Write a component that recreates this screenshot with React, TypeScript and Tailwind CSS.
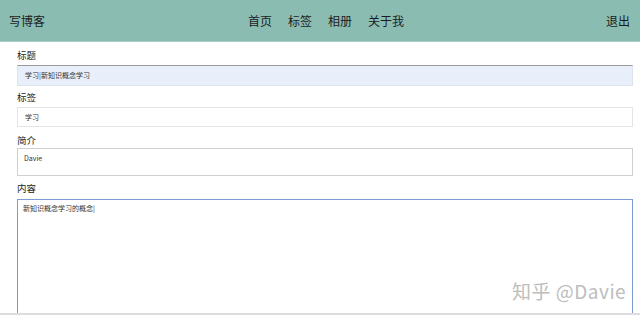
const font = { fontFamily: '"Noto Sans CJK SC", "Liberation Sans", sans-serif' };

export default function App() {
  const nav = ['首页', '标签', '相册', '关于我'];

  return (
    <div className="w-[640px] h-[315px] overflow-hidden bg-white relative" style={font}>
      <header className="h-[42px] bg-[#8bbcb2] border-b border-[#a9cfc6] flex items-center px-[9px] text-[#1c1c1c] text-[12px]">
        <div className="w-[239px]">写博客</div>
        <nav className="flex gap-[16px]">
          {nav.map((n) => (
            <span key={n}>{n}</span>
          ))}
        </nav>
        <div className="ml-auto mr-[1px]">退出</div>
      </header>

      <form className="pl-[17px] pr-[7px] text-[9.5px] text-[#222]">
        <div className="mt-[6px] h-[14px] leading-[14px]">标题</div>
        <div className="mt-[3px] h-[21px] bg-[#e8effa] border border-[#dde3ec] border-t-[#9a9a9a] flex items-center pl-[7px] text-[7px] text-[#333]">
          学习|新知识概念学习
        </div>
        <div className="mt-[4px] h-[14px] leading-[14px]">标签</div>
        <div className="mt-[3px] h-[20px] bg-white border border-[#e4e4e4] flex items-center pl-[7px] text-[7px] text-[#333]">
          学习
        </div>
        <div className="mt-[6px] h-[14px] leading-[14px]">简介</div>
        <div className="mt-[1px] h-[28px] bg-white border border-[#cfcfcf] pl-[6px] pt-[4px] text-[7px] text-[#333] leading-[10px]">
          Davie
        </div>
        <div className="mt-[5px] h-[14px] leading-[14px]">内容</div>
        <div className="mt-[4px] h-[130px] bg-white border border-[#7d9bd3] pl-[5px] pt-[3px] text-[7px] text-[#333] leading-[10px]">
          新知识概念学习的概念|
        </div>
      </form>

      <div className="absolute left-0 right-0 bottom-0 h-[2px] bg-[#dcdcdc]" />
      <div className="absolute left-[512px] top-[277px] text-[19px] text-[#bdbdbd] tracking-[0.5px]">
        知乎 @Davie
      </div>
    </div>
  );
}
